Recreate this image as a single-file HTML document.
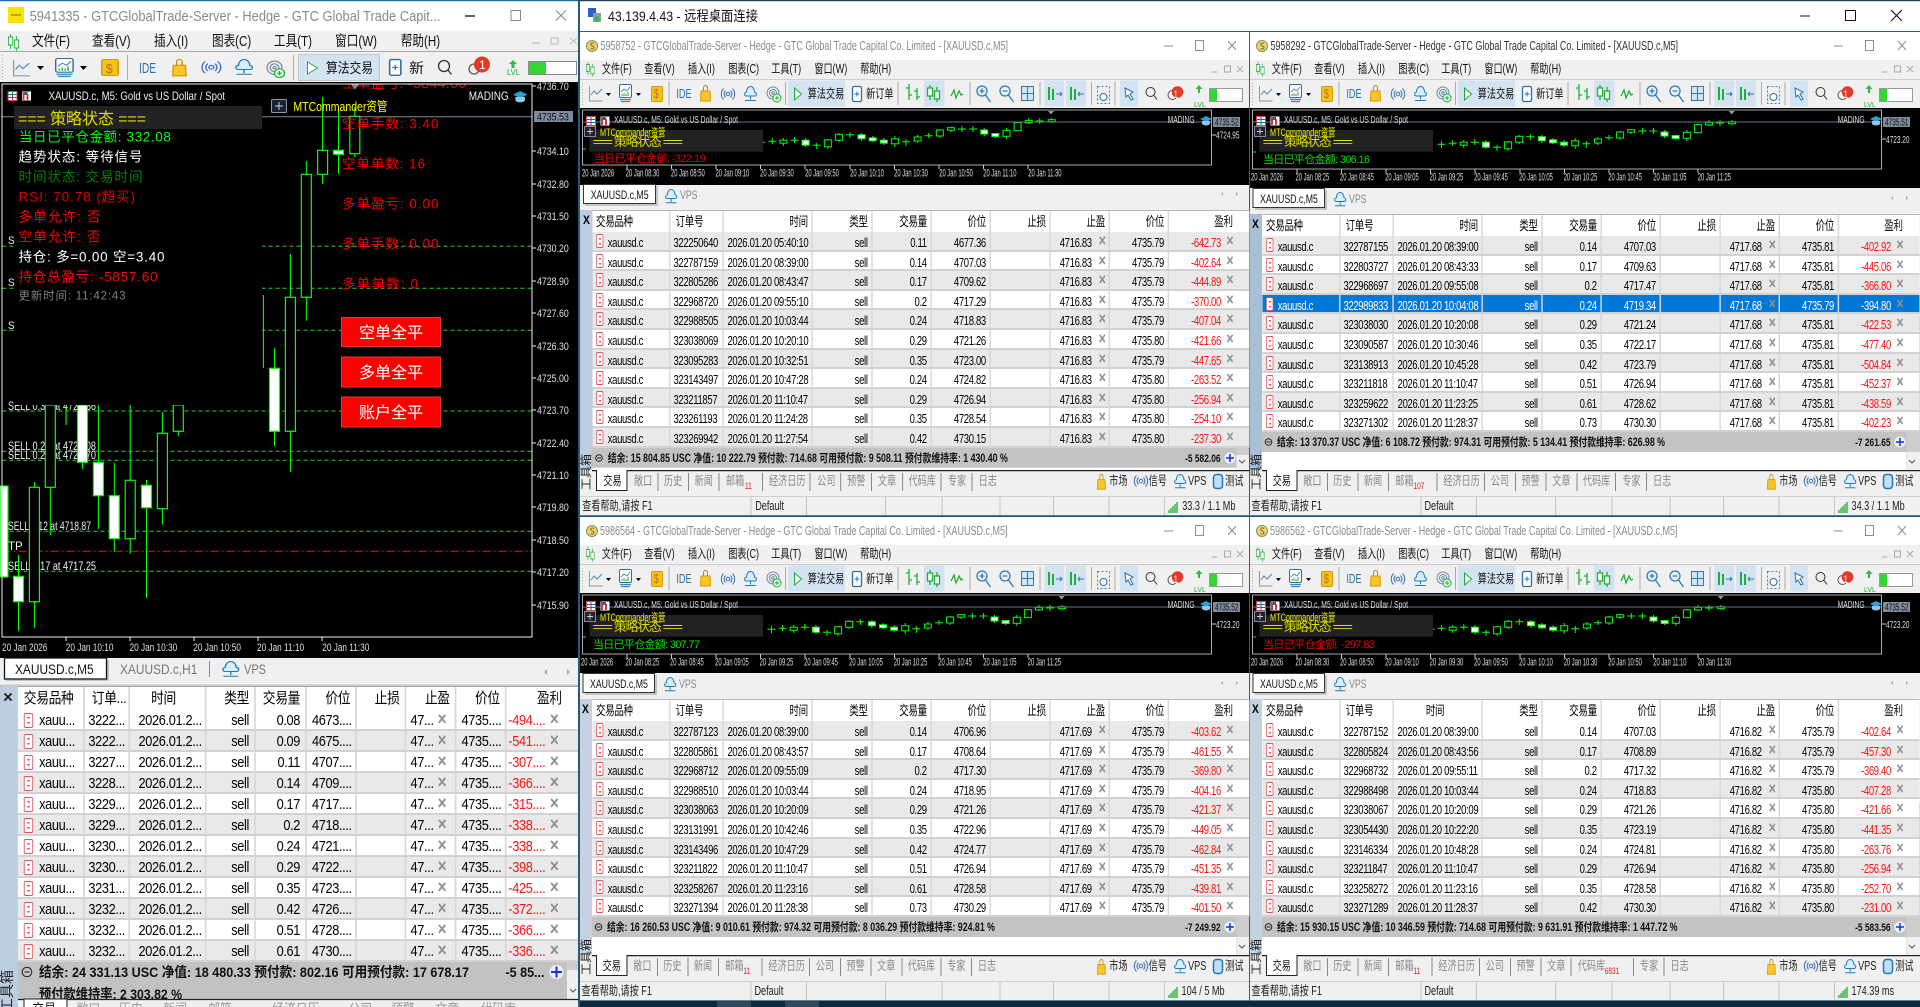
<!DOCTYPE html>
<html><head><meta charset="utf-8"><title>Remote</title>
<style>
html,body{margin:0;padding:0;background:#0c2a3c;width:1920px;height:1007px;overflow:hidden}
body{position:relative;font-family:"Liberation Sans","Noto Sans CJK SC",sans-serif}
svg{position:absolute;left:0;top:0;font-family:"Liberation Sans","Noto Sans CJK SC",sans-serif}
.bl{filter:blur(.35px)}
.t{position:absolute;width:917px;transform:scaleX(.73);transform-origin:0 0;font-size:13px;letter-spacing:-.45px;color:#000;filter:blur(.3px)}
.r{display:grid;grid-template-columns:105px 73px 122px 82px 81px 81px 82px 81px 81px 94px;margin-left:17px;height:19.6px;line-height:21.5px;border-bottom:2px solid #d2d2d2;box-sizing:border-box;background:#fff}
.r.g{background:#e9e9e9}
.r.s{background:#0078d7;color:#fff}
.r b{font-weight:400;display:block;position:relative;border-left:2px solid #d8d8d8;padding:0 5px;text-align:right;white-space:nowrap;overflow:hidden}
.r b:nth-child(1){text-align:left;padding-left:21px;border-left:0}
.r b:nth-child(2){text-align:left;padding-left:4px}
.r b:nth-child(8){padding-right:23px}
.r b:nth-child(10){padding-right:21px;color:#f11}
.r.s b:nth-child(10){color:#fff}
.r b:nth-child(8)::after,.r b:nth-child(10)::after{content:"×";position:absolute;right:4px;top:-1px;color:#8f8f8f;font-size:17px;line-height:20px;font-weight:700}
.r b:nth-child(1)::before{content:"";position:absolute;left:5px;top:2px;width:8px;height:12px;border:1.3px solid #e2525c;border-radius:2px;background:linear-gradient(#e2525c,#e2525c) 3px 3px/3px 1.5px no-repeat,linear-gradient(#e2525c,#e2525c) 3px 8px/3px 1.5px no-repeat,#fff}
.h{height:22px;line-height:21px;border-top:1px solid #b8b8b8;border-bottom:0;margin-left:17px}
.h b:nth-child(8){padding-right:5px}.h b:nth-child(10){padding-right:5px;color:#111}
.h b:nth-child(1)::before,.h b:nth-child(8)::after,.h b:nth-child(10)::after{display:none}
.h b:nth-child(1){padding-left:5px}.h b:nth-child(2){padding-left:7px}
.lt{width:680px;transform:scaleX(.85);font-size:15px;letter-spacing:-.4px;filter:none}
.lt .r{grid-template-columns:77px 53px 90px 58px 60px 59px 58px 59px 59px 73px;margin-left:21px;height:21px;line-height:21px}
.lt .r b{padding:0 6px;text-align:left}
.lt .r b:nth-child(1){padding-left:25px}
.lt .r b:nth-child(1)::before{left:7px;top:3px;width:9px;height:13px}
.lt .r b:nth-child(2){padding-left:4px}
.lt .r b:nth-child(3){padding-left:10px}
.lt .r b:nth-child(4),.lt .r b:nth-child(5){text-align:right}
.lt .r b:nth-child(8){padding:0 5px}
.lt .r b:nth-child(10){padding:0 2px}
.lt .r b:nth-child(8)::after,.lt .r b:nth-child(10)::after{right:10px;font-size:18px}
.lt .h{height:24px;line-height:23px;border-top:1px solid #aaa}
.lt .h b{text-align:right!important;padding:0 6px!important}
.lt .h b:nth-child(1){text-align:left!important;padding-left:7px!important}
.lt .h b:nth-child(2){text-align:left!important;padding-left:8px!important}
.lt .h b:nth-child(3){padding-right:34px!important}
</style></head><body>
<svg width="1920" height="1007" viewBox="0 0 1920 1007">
<defs>
<clipPath id="cc"><rect x="0" y="84" width="578" height="20"/></clipPath>
<g id="iL" fill="none"><path d="M.5 1v15h13" stroke="#8a9aa8"/><path d="M2 10l3-4 3 3 5-5" stroke="#4a8ac0"/></g>
<g id="iC"><rect x=".5" y=".5" width="12" height="13" rx="1.5" fill="#fff" stroke="#2a6fa8"/><path d="M2 8l3-3 3 2 3-4" stroke="#4a8ac0" fill="none"/><path d="M3 12v-2M5 12v-3M7 12v-2M9 12v-4" stroke="#1fae3a"/><path d="M1 15.5h11M2 17.5h9" stroke="#2a8fc8" stroke-width="1.2"/></g>
<g id="iD"><rect x=".5" y=".5" width="11" height="15" rx="1.5" fill="#f6c21c" stroke="#d69a00"/></g>
<g id="iB"><path d="M1 6h9l.5 10H.5z" fill="#f8c62a" stroke="#d69a00"/><path d="M3.500 6V2.500a2 2 0 0 1 4 0V6" fill="none" stroke="#c48a00"/></g>
<g id="iS" fill="none" stroke="#3a6fb8"><circle cx="6" cy="7" r="1.8"/><path d="M3.500 3.500a5 5 0 0 0 0 7M8.500 3.500a5 5 0 0 1 0 7M1.500 1.500a8 8 0 0 0 0 11M10.500 1.500a8 8 0 0 1 0 11"/></g>
<g id="iO"><path d="M2.500 10C0 10 0 6.500 2.500 6 2.500 2.500 4.500.5 6.500.5s4 2 4 5.500c2.500.5 2.500 4 0 4z" fill="#d8eefc" stroke="#1f7ab8"/><path d="M6.500 10v3.500M1 14.500h11" stroke="#1f7ab8" fill="none"/></g>
<g id="iG" fill="none"><circle cx="6" cy="7" r="6" stroke="#6a8aa8"/><circle cx="6" cy="7" r="3.5" stroke="#6a8aa8"/><circle cx="6" cy="7" r="1.2" stroke="#6a8aa8"/><circle cx="10" cy="12" r="4" fill="#e8f8e8" stroke="#1fae3a"/><path d="M8 12h4M10 10v4" stroke="#1fae3a"/></g>
<g id="iN"><rect x=".5" y=".5" width="9" height="15" rx="1.5" fill="#fff" stroke="#2a6fa8" stroke-width="1.3"/><path d="M2.500 8h5M5 5.500v5" stroke="#2a6fa8" fill="none"/></g>
<g id="iK" stroke="#1fae3a" fill="#fff"><path d="M3 0v15M10 2v15"/><rect x=".5" y="3" width="5" height="8"/><rect x="7.500" y="6" width="5" height="8"/></g>
<g id="iH"><rect x=".5" y=".5" width="9" height="9" fill="#fff" stroke="#e04040"/><path d="M1 3.500h8M1 6.500h8M5 1v8" stroke="#2a5fa8"/><rect x="14.500" y=".5" width="9" height="9" fill="#fff"/><path d="M15 9V1h2v8zM19 9V3h2v6z" fill="#c04040"/><path d="M17 1h3v3h-3z" fill="#2a5fa8"/></g>
<g id="iW"><path d="M0 3l6-3 6 3-6 3z" fill="#2a9fd8"/><path d="M2 5v3c2 2 6 2 8 0V5" fill="#8cc8ec"/></g>
<g id="iT"><circle cx="6" cy="7" r="5.500" fill="#eed078" stroke="#7a9a50"/><path d="M8 4.500c-2-1.500-4 0-3 1.500s3 1 3 2.500-2 2-3.500 1" fill="none" stroke="#8a6a10"/></g>
<g id="tb">
<path d="M2.500 3v22" stroke="#aaa" stroke-dasharray="1 2"/>
<use href="#iL" x="9" y="5"/><path d="M26 13h5l-2.500 3z"/>
<use href="#iC" x="39" y="4"/><path d="M56 13h5l-2.500 3z"/>
<use href="#iD" x="71" y="6"/>
<path d="M89 2v23M205.500 2v23M318 2v23M390 2v23M460 2v23M511.500 2v23M535 2v23" stroke="#aaa"/>
<use href="#iB" x="120" y="5"/><use href="#iS" x="142" y="7"/><use href="#iO" x="164" y="6"/><use href="#iG" x="187" y="6"/>
<rect x="208" y=".5" width="57" height="26" fill="#d3e3f2"/><path d="M214.500 8v12l7-6z" fill="#fff" stroke="#1fae3a"/>
<use href="#iN" x="272" y="6"/>
<path d="M329 4v16M329 8h-3M329 15h3M337 8v12M337 11h-3M337 17h3" stroke="#1fae3a" fill="none" stroke-width="1.300"/>
<rect x="344" y=".5" width="20.500" height="26" fill="#d3e3f2"/><use href="#iK" x="347" y="5" stroke-width="1.300"/>
<path d="M371 16l3-6 2 8 3-7 2 4 2-1" stroke="#1fae3a" fill="none" stroke-width="1.300"/>
<g fill="none" stroke="#2a7cb8" stroke-width="1.300"><circle cx="402" cy="11" r="5"/><path d="M405.500 15l5 7M399.500 11h5M402 8.500v5"/><circle cx="425" cy="11" r="5"/><path d="M428.500 15l5 7M422.500 11h5"/></g>
<rect x="441.500" y="6.500" width="12" height="14" fill="#cfe6f7" stroke="#2a7cb8"/><path d="M441.500 13.500h12M447.500 6.500v14" stroke="#2a7cb8"/>
<rect x="464.500" y=".5" width="19.500" height="26" fill="#d3e3f2"/><rect x="486" y=".5" width="20" height="26" fill="#d3e3f2"/>
<path d="M469 7v13M473 9v11" stroke="#1fae3a" fill="none" stroke-width="2"/><path d="M476 14h6M480 12l2 2-2 2" stroke="#2a7cb8" fill="none"/><path d="M491 7v13M495 9v11" stroke="#1fae3a" fill="none" stroke-width="2"/><path d="M498 14h6M498 14l2-2M498 14l2 2" stroke="#2a7cb8" fill="none"/>
<rect x="517.500" y="6.500" width="12" height="17" fill="none" stroke="#3a8ac0" stroke-dasharray="2 2"/><circle cx="523.500" cy="17" r="3.500" fill="#fff" stroke="#2a6fa8"/>
<rect x="540" y=".5" width="18" height="26" fill="#d3e3f2"/><path d="M545 8l8 4-3 2 3 5-2 1-3-5-2 2z" fill="#fff" stroke="#2a6fa8"/>
<circle cx="570.500" cy="12" r="4.500" fill="none" stroke="#333"/><path d="M574 15.500l3 4" stroke="#333"/>
<circle cx="592.500" cy="15" r="4.500" fill="none" stroke="#555"/><circle cx="597.500" cy="12" r="5.800" fill="#e13a28"/>
<path d="M619 5l-3.500 4h2.500v4h2V9h2.500z" fill="#3ab54a"/>
<rect x="629.500" y="8.500" width="33" height="13" fill="#fff" stroke="#999"/><rect x="630" y="9" width="7" height="12" fill="#35d535"/>
</g>
<g id="chrome">
<rect x="0" y="32" width="670" height="28" fill="#fff"/>
<rect x="0" y="60" width="670" height="20" fill="#f0f0f0"/><path d="M0 79.500h670" stroke="#cfcfcf"/>
<rect x="0" y="80" width="670" height="28" fill="#f0f0f0"/>
<use href="#tb" y="80"/>
<use href="#iT" x="6" y="39"/>
<path d="M584 46h9M648 41l8 9M656 41l-8 9" stroke="#8f8f8f" fill="none"/><rect x="615.500" y="40.500" width="8" height="10" fill="none" stroke="#8f8f8f"/>
<use href="#iK" transform="translate(6,62) scale(.65,.85)"/>
<path d="M632 72h5M644.500 66h6v6h-6zM657 66l6 6M663 66l-6 6" stroke="#aaa" fill="none"/>
<rect x="0" y="470" width="670" height="26" fill="#f0f0f0"/><path d="M12 470.500h658" stroke="#222" stroke-width="1.500"/>
<path d="M16.500 470v20.500h30.500V470" fill="#fff" stroke="#222"/>
<use href="#iB" transform="translate(517,474) scale(.8,.95)"/><use href="#iS" x="555" y="474"/><use href="#iO" transform="translate(594,474) scale(.95)"/>
<rect x="633.500" y="474.500" width="9" height="14" rx="3" fill="#bfe0f6" stroke="#1f7ab8" stroke-width="1.500"/>
<rect x="0" y="496" width="670" height="20" fill="#f0f0f0"/><path d="M0 496.500h670" stroke="#d0d0d0"/>
<path d="M171 497v19M226.500 497v19M305.600 497v19M362 497v19M420 497v19M473.500 497v19M529 497v19M584.600 497v19" stroke="#c4c4c4"/>
<path d="M589 510v3M591 508v5M593 506v7M595 504v9M597 502v11" stroke="#22aa33" stroke-width="1.300"/>
<path d="M0 516h670" stroke="#2a5a78" stroke-width="1.500"/>
</g>
<g id="mc">
<path d="M191.500 31v7M187.500 34.300h8M202.600 30v6M198.600 33.300h8M213.700 30v8M224.800 29v6M220.800 32.300h8M235.900 30v9M247 35v6M243 37.300h8M258.100 31v10M269.200 25v9M280.300 24v6M276.300 26.700h8M291.900 25v8M303 28v6M314.100 30v7M325.200 28v11M336.300 31v7M332.300 33.700h8M347.900 27v8M359 25v5M355 27.700h8M370.100 21v9M381.200 19v5M392.300 18v6M388.300 21h8M403.400 18v6M399.400 21h8M414.500 20v8M425.600 25v5M436.800 20v11M447.900 14v9M459 10v6M470 10v6M466 13h8M482 10v5" stroke="#0f0" fill="none"/>
<g stroke="#0f0"><g fill="#000"><rect x="210.200" y="32.200" width="7" height="3"/><rect x="254.600" y="31.800" width="7" height="7"/><rect x="265.700" y="26.300" width="7" height="6"/><rect x="321.700" y="30.800" width="7" height="5"/><rect x="344.400" y="29" width="7" height="4"/><rect x="366.600" y="22" width="7" height="6"/><rect x="377.700" y="19.700" width="7" height="2.500"/><rect x="433.300" y="22.300" width="7" height="6"/><rect x="444.400" y="14.700" width="7" height="8"/><rect x="455.500" y="12.400" width="7" height="2.500"/><rect x="478.500" y="11.700" width="7" height="2"/></g>
<g fill="#fff"><rect x="232.400" y="32.200" width="7" height="5"/><rect x="288.400" y="26.700" width="7" height="4"/><rect x="299.500" y="29.800" width="7" height="3"/><rect x="310.600" y="32.200" width="7" height="3"/><rect x="411" y="22" width="7" height="4"/><rect x="422.100" y="25.500" width="7" height="3"/></g></g>
</g>
</defs>

<!-- LEFT WINDOW -->
<rect x="0" y="0" width="580" height="1007" fill="#f0f0f0"/>
<rect x="0" y="0" width="578" height="31" fill="#fff"/><rect x="0" y="0" width="578" height="1.200" fill="#1f6f96"/>
<rect x="8" y="7" width="16" height="16" fill="#ffe100"/><path d="M11 15h10" stroke="#665" stroke-width="1"/>
<text x="29.600" y="21" font-size="15" fill="#8a8a8a" textLength="411" lengthAdjust="spacingAndGlyphs">5941335 - GTCGlobalTrade-Server - Hedge - GTC Global Trade Capit...</text>
<path d="M465 16h10" stroke="#111" stroke-width="1.300"/><rect x="511" y="10.500" width="9.500" height="10" fill="none" stroke="#888"/><path d="M556 10.500l10 10M566 10.500l-10 10" stroke="#888"/>
<rect x="0" y="31" width="578" height="20" fill="#f0f0f0"/><path d="M0 51.500h578" stroke="#aaa"/>
<use href="#iK" transform="translate(8,34) scale(.85,1)"/>
<g transform="scale(.8,1)" font-size="14.500" fill="#111"><text y="46"><tspan x="40">文件(F)</tspan><tspan x="115">查看(V)</tspan><tspan x="192.500">插入(I)</tspan><tspan x="265">图表(C)</tspan><tspan x="342.500">工具(T)</tspan><tspan x="419">窗口(W)</tspan><tspan x="501">帮助(H)</tspan></text></g>
<path d="M532 43h8M551 38h7v6h-7zM570 38l7 6M577 38l-7 6" stroke="#bbb" fill="none"/>
<rect x="0" y="52" width="578" height="30" fill="#f0f0f0"/>
<path d="M2.500 55v25" stroke="#aaa" stroke-dasharray="1 2"/>
<use href="#iL" transform="translate(13,59) scale(1.25,1.05)"/><path d="M37 66h7l-3.500 4z"/>
<use href="#iC" transform="translate(55,58) scale(1.45,1.05)"/><path d="M80 66h7l-3.500 4z"/>
<use href="#iD" transform="translate(101,59) scale(1.5,1.06)"/><text x="105.500" y="73" font-size="13" fill="#b07a00">$</text>
<path d="M127.500 55v25M293.500 55v25" stroke="#aaa"/>
<text x="139" y="73" font-size="15" fill="#2a6fa8" textLength="17" lengthAdjust="spacingAndGlyphs">IDE</text>
<use href="#iB" transform="translate(172,59) scale(1.35,1.05)"/>
<use href="#iS" transform="translate(203,60) scale(1.4,1.05)"/><use href="#iO" transform="translate(235,59) scale(1.4,1.05)"/><use href="#iG" transform="translate(267,60) scale(1.25,1.1)"/>
<rect x="298.500" y="54.500" width="81" height="26" fill="#d3e3f2" stroke="#c0c8d0"/><path d="M307.500 62v12l10-6z" fill="#fff" stroke="#1fae3a"/>
<text x="326" y="73" font-size="14" fill="#111" textLength="47" lengthAdjust="spacingAndGlyphs">算法交易</text>
<use href="#iN" transform="translate(389,59) scale(1.25,1.05)"/>
<text x="409" y="73" font-size="14" fill="#111" textLength="15" lengthAdjust="spacingAndGlyphs">新</text>
<circle cx="444" cy="66" r="5.500" fill="none" stroke="#333" stroke-width="1.300"/><path d="M448 70l3.500 4.500" stroke="#333" stroke-width="1.300"/>
<circle cx="474" cy="69" r="5" fill="none" stroke="#555" stroke-width="1.300"/><circle cx="482" cy="64.500" r="8" fill="#e13a28"/><text x="479" y="69" font-size="12" fill="#fff">1</text>
<path d="M513 60l-4 4h2.500v4h3v-4h2.500z" fill="#3ab54a"/><text x="507" y="75" font-size="8" fill="#1fae3a" textLength="13" lengthAdjust="spacingAndGlyphs">LVL</text>
<rect x="528.500" y="61.500" width="48" height="13" fill="#fff" stroke="#888"/><rect x="529" y="62" width="17" height="12" fill="#35d535"/>

<rect x="0" y="82" width="578" height="576" fill="#000"/>
<g font-size="14" fill="#d00" clip-path="url(#cc)"><text x="342" y="88" fill="#e00" textLength="124">空单盈亏: -5844.00</text></g>
<path d="M2.500 246.300H532M2.500 288.300H532M2.500 330.300H532M2.500 411H532M2.500 451.300H532M2.500 460.300H532M2.500 531.300H532M2.500 571.300H532" stroke="#28d028" stroke-dasharray="4 3" fill="none"/>
<path d="M2.500 551.300H532" stroke="#e01818" stroke-dasharray="8 3 2 3" fill="none"/>
<g fill="#eee" font-size="11.500"><text x="8" y="410" textLength="88" lengthAdjust="spacingAndGlyphs">SELL 0.35 at 4721.36</text><text x="8" y="450" textLength="88" lengthAdjust="spacingAndGlyphs">SELL 0.29 at 4722.08</text><text x="8" y="459" textLength="88" lengthAdjust="spacingAndGlyphs">SELL 0.24 at 4721.70</text><text x="8" y="530" textLength="83" lengthAdjust="spacingAndGlyphs">SELL 0.12 at 4718.87</text><text x="8" y="550">TP</text><text x="8" y="570" textLength="88" lengthAdjust="spacingAndGlyphs">SELL 0.17 at 4717.25</text></g>
<path d="M18.500 555V631M34.400 482V627.700M50.300 405V535M66 405V425M82.500 405V469M98.400 405V529M114.300 463V551.700M130.200 405V553.700M146.500 480V597.700M162.400 412.300V524.700M178.300 405V436M263.400 295V368M274.500 348.300V446M290.400 254V471.700M306.300 161V320.700M322.600 97V183.700M338.500 108V173.700M354.800 107V157.300" stroke="#0f0" stroke-width="1.100" fill="none"/>
<g stroke="#0f0" stroke-width="1.200">
<g fill="#fff"><rect x="0" y="486" width="8" height="91"/><rect x="13.500" y="576.300" width="10" height="25.400"/><rect x="77.500" y="405" width="10" height="57.300"/><rect x="93.400" y="462.300" width="10" height="33.400"/><rect x="109.300" y="495.700" width="10" height="43"/><rect x="141.500" y="485.300" width="10" height="22.400"/><rect x="269.500" y="368.300" width="10" height="63"/><rect x="333.500" y="150.300" width="10" height="4"/></g>
<g fill="#000"><rect x="29.400" y="487.300" width="10" height="114.400"/><rect x="45.300" y="405" width="10" height="82.300"/><rect x="125.200" y="480.300" width="10" height="58.400"/><rect x="157.400" y="433.300" width="10" height="75.400"/><rect x="173.300" y="405" width="10" height="26.300"/><rect x="285.400" y="297.300" width="10" height="134"/><rect x="301.300" y="174.300" width="10" height="123"/><rect x="317.600" y="150.300" width="10" height="24"/><rect x="349.800" y="116.300" width="10" height="37.400"/></g></g>
<rect x="14" y="85" width="248" height="320" fill="#000"/>
<path d="M2.500 116.700H532" stroke="#7d8c9c"/>
<rect x="14" y="106" width="248" height="23" fill="#222"/>
<rect x="2" y="84" width="530" height="553" fill="none" stroke="#eee"/>
<path d="M351 84.500h8l-4 5z" fill="#888"/>
<use href="#iH" transform="translate(7.500,91) scale(1,1)"/>
<text x="48.500" y="100" font-size="12" fill="#eee" textLength="176.500" lengthAdjust="spacingAndGlyphs">XAUUSD.c, M5:  Gold vs US Dollar / Spot</text>
<text x="468.700" y="100" font-size="12" fill="#eee" textLength="40" lengthAdjust="spacingAndGlyphs">MADING</text>
<use href="#iW" transform="translate(513,91) scale(1.2)"/>
<g fill="#eee" font-size="11"><text transform="translate(8,244) scale(.9,1)">S</text><text transform="translate(8,286) scale(.9,1)">S</text><text transform="translate(8,329) scale(.9,1)">S</text></g>
<text x="18" y="124" font-size="16" fill="#dede00" textLength="128">=== 策略状态 ===</text>
<g font-size="13.500">
<text x="18.900" y="141.500" fill="#0f0" textLength="152">当日已平仓金额: 332.08</text>
<text x="18.500" y="161.500" fill="#fff" textLength="124">趋势状态: 等待信号</text>
<text x="18.500" y="181.500" fill="#008000" textLength="124">时间状态: 交易时间</text>
<text x="18.500" y="201.500" fill="#d80000" textLength="116.500">RSI: 70.78 (超买)</text>
<text x="18.500" y="221.500" fill="#f00" textLength="82">多单允许: 否</text>
<text x="18.500" y="241.500" fill="#f00" textLength="82">空单允许: 否</text>
<text x="18.500" y="261.500" fill="#fff" textLength="146">持仓: 多=0.00 空=3.40</text>
<text x="18.500" y="281.500" fill="#f00" textLength="139">持仓总盈亏: -5857.60</text>
<text x="18.500" y="299.500" fill="#808080" font-size="11.500" textLength="107">更新时间: 11:42:43</text>
<text x="342" y="128.500" fill="#e00" textLength="96.500">空单手数: 3.40</text>
<text x="342" y="168.500" fill="#e00" textLength="83">空单单数: 16</text>
<text x="342" y="208.500" fill="#e00" textLength="96.500">多单盈亏: 0.00</text>
<text x="342" y="248.500" fill="#e00" textLength="96.500">多单手数: 0.00</text>
<text x="342" y="288.500" fill="#e00" textLength="76">多单单数: 0</text>
</g>
<rect x="271.500" y="99.500" width="15" height="13" rx="1" fill="#1a2430" stroke="#8899aa"/><path d="M275 106h8M279 102v8" stroke="#ccd"/>
<text x="293.400" y="111" font-size="13" fill="#ff0" textLength="94" lengthAdjust="spacingAndGlyphs">MTCommander资管</text>
<g fill="#f00" stroke="#e33"><rect x="341.500" y="317.500" width="99" height="29"/><rect x="341.500" y="357" width="99" height="30"/><rect x="341.500" y="397" width="99" height="30"/></g>
<g font-size="16" fill="#fff" text-anchor="middle"><text x="391" y="338">空单全平</text><text x="391" y="378">多单全平</text><text x="391" y="418">账户全平</text></g>
<path d="M532 86h4M532 151h4M532 184h4M532 216h4M532 248h4M532 281h4M532 313h4M532 346h4M532 378h4M532 410h4M532 443h4M532 475h4M532 507h4M532 540h4M532 572h4M532 605h4M66 637v4M130 637v4M194 637v4M258 637v4M322 637v4" stroke="#eee"/>
<g font-size="11" fill="#e0e0e0" transform="translate(537,0) scale(.8,1)"><text y="90">4736.70</text><text y="155">4734.10</text><text y="188">4732.80</text><text y="220">4731.50</text><text y="252">4730.20</text><text y="285">4728.90</text><text y="317">4727.60</text><text y="350">4726.30</text><text y="382">4725.00</text><text y="414">4723.70</text><text y="447">4722.40</text><text y="479">4721.10</text><text y="511">4719.80</text><text y="544">4718.50</text><text y="576">4717.20</text><text y="609">4715.90</text></g>
<rect x="534" y="111" width="39" height="11" fill="#7d8c9c"/><text transform="translate(537,120.500) scale(.8,1)" font-size="11" fill="#111">4735.53</text>
<g font-size="11" fill="#e0e0e0" transform="translate(2,651) scale(.75,1)"><text><tspan x="0">20 Jan 2026</tspan><tspan x="85">20 Jan 10:10</tspan><tspan x="170">20 Jan 10:30</tspan><tspan x="255">20 Jan 10:50</tspan><tspan x="340">20 Jan 11:10</tspan><tspan x="427">20 Jan 11:30</tspan></text></g>

<rect x="0" y="658" width="578" height="28" fill="#f0f0f0"/>
<rect x="4.500" y="658" width="102" height="21" fill="#fff" stroke="#111" stroke-width="1.300"/><path d="M108 660v20H6" stroke="#999" fill="none"/>
<text transform="translate(15,674) scale(.85,1)" font-size="14" fill="#111">XAUUSD.c,M5</text>
<text transform="translate(120,674) scale(.85,1)" font-size="14" fill="#777">XAUUSD.c,H1</text>
<path d="M209.500 661v16" stroke="#888"/><use href="#iO" transform="translate(222,661) scale(1.35,1.05)"/>
<text x="244" y="674" font-size="14" fill="#777" textLength="22" lengthAdjust="spacingAndGlyphs">VPS</text>
<path d="M547 669l-3 3 3 3zM567 669l3 3-3 3z" fill="#aaa"/>
<rect x="0" y="684.500" width="578" height="1.500" fill="#c8c8c8"/>
<rect x="0" y="686" width="18" height="321" fill="#bccde0"/><rect x="18" y="686" width="549" height="313" fill="#fff"/>
<path d="M4.500 693.500l7 7M11.500 693.500l-7 7" stroke="#111" stroke-width="1.600"/>
<rect x="567" y="686" width="11" height="321" fill="#f0f0f0"/><rect x="567" y="770" width="11" height="200" fill="#cdcdcd"/>
<path d="M571 698l3-3 3 3M571 989l3 3 3-3" stroke="#555" fill="none" transform="translate(-1,0)"/>
<path d="M187 699h7l-3.500-3.500z" fill="#222"/>
<rect x="18" y="961" width="549" height="38" fill="#c2c2c2"/>
<circle cx="27" cy="972" r="4.800" fill="none" stroke="#222"/><path d="M24.500 972h5" stroke="#222"/>
<text x="39" y="977" font-size="14" font-weight="700" fill="#111" textLength="430" lengthAdjust="spacingAndGlyphs">结余: 24 331.13 USC  净值: 18 480.33  预付款: 802.16  可用预付款: 17 678.17</text>
<text x="505.500" y="977" font-size="14" font-weight="700" fill="#111" textLength="39" lengthAdjust="spacingAndGlyphs">-5 85...</text>
<circle cx="556.500" cy="972" r="7" fill="#eef2fa"/><path d="M551 972h11M556.500 966.500v11" stroke="#1b2fe0" stroke-width="2"/>
<text x="39" y="999" font-size="14" font-weight="700" fill="#111" textLength="143" lengthAdjust="spacingAndGlyphs">预付款维持率: 2 303.82 %</text>
<rect x="18" y="999" width="560" height="8" fill="#f0f0f0"/><path d="M18 999.500h560" stroke="#222" stroke-width="1.200"/>
<rect x="24" y="999" width="43" height="9" fill="#fff" stroke="#222"/>
<g font-size="14" fill="#999"><text transform="translate(0,1014) scale(.85,1)"><tspan x="38" fill="#111">交易</tspan><tspan x="90">敞口</tspan><tspan x="140">历史</tspan><tspan x="192">新闻</tspan><tspan x="245">邮箱</tspan><tspan x="320">经济日历</tspan><tspan x="410">公司</tspan><tspan x="460">预警</tspan><tspan x="512">文章</tspan><tspan x="565">代码库</tspan></text></g>
<text transform="translate(12,1012) rotate(-90)" font-size="14" fill="#222">工具箱</text>
<rect x="578" y="0" width="2" height="1007" fill="#2a5a78"/>

<!-- RDP TITLE -->
<rect x="580" y="0" width="1340" height="31" fill="#fff"/><rect x="578" y="0" width="1342" height="1.200" fill="#1d3f58"/>
<rect x="588" y="8" width="8" height="9" fill="#2a5fc8"/><rect x="593" y="13" width="8" height="9" fill="#8a9aa8"/><circle cx="597" cy="19" r="2.500" fill="#2bb84a"/>
<text x="608" y="21" font-size="14" fill="#111" textLength="150" lengthAdjust="spacingAndGlyphs">43.139.4.43 - 远程桌面连接</text>
<path d="M1800 16h10M1891 10l11 11M1902 10l-11 11" stroke="#111" stroke-width="1.100" fill="none"/><rect x="1845.500" y="10.500" width="10" height="10" fill="none" stroke="#111"/>
<rect x="578" y="31" width="1342" height="1" fill="#2f5f80"/>

<g class="bl">
<!-- TL -->
<g transform="translate(580,0)">
<use href="#chrome"/>
<text x="20.500" y="50" font-size="13" fill="#8a8a8a" textLength="407.500" lengthAdjust="spacingAndGlyphs">5958752 - GTCGlobalTrade-Server - Hedge - GTC Global Trade Capital Co. Limited - [XAUUSD.c,M5]</text>
<g transform="scale(.73,1)" font-size="12.500" fill="#111"><text y="73"><tspan x="30">文件(F)</tspan><tspan x="88">查看(V)</tspan><tspan x="148">插入(I)</tspan><tspan x="203">图表(C)</tspan><tspan x="262">工具(T)</tspan><tspan x="321">窗口(W)</tspan><tspan x="384">帮助(H)</tspan></text>
<text y="98"><tspan x="132" fill="#2a6fa8">IDE</tspan><tspan x="312">算法交易</tspan><tspan x="392">新订单</tspan><tspan x="101" fill="#b07a00">$</tspan><tspan x="813" fill="#fff" font-size="11">1</tspan></text></g>
<text x="614" y="107" font-size="7" fill="#1fae3a">LVL</text>
<rect y="108" width="670" height="77" fill="#000"/>
<use href="#mc" transform="translate(-10.300,108)"/>
<rect x="3" y="111" width="180" height="53" fill="#000"/><rect x="9.400" y="130" width="173.600" height="21.700" fill="#222"/>
<path d="M3 149h3" stroke="#0f0"/><path d="M2 122h630" stroke="#667788"/>
<rect x="2.500" y="110" width="629" height="55" fill="none" stroke="#aaa"/>
<path d="M468 111h6l-3 3.500z" fill="#999"/>
<use href="#iH" x="6" y="116"/>
<text x="34" y="123" font-size="10" fill="#ddd" textLength="124" lengthAdjust="spacingAndGlyphs">XAUUSD.c, M5:  Gold vs US Dollar / Spot</text>
<text x="587.600" y="123" font-size="10" fill="#ddd" textLength="27" lengthAdjust="spacingAndGlyphs">MADING</text><use href="#iW" x="620" y="116"/>
<rect x="4.500" y="126.500" width="11" height="10" fill="#223" stroke="#889"/><path d="M7 131.500h6M10 128.500v6" stroke="#ccc"/>
<text x="12.800" y="146" font-size="13" fill="#dede00" textLength="90">=== 策略状态 ===</text>
<text x="20" y="136" font-size="11" fill="#ee0" textLength="65.500" lengthAdjust="spacingAndGlyphs">MTCommander资管</text>
<text x="13.700" y="162" font-size="11" fill="#e00000" textLength="112">当日已平仓金额: -322.19</text>
<rect x="633" y="117" width="27" height="10" fill="#7d8c9c"/><text transform="translate(635,125.500) scale(.62,1)" font-size="10.500" fill="#111">4735.52</text>
<path d="M632 135h4M47 165v4M91.500 165v4M136 165v4M180.500 165v4M225 165v4M270 165v4M314.500 165v4M359 165v4M403.500 165v4M448 165v4" stroke="#ccc"/>
<text transform="translate(636,138.500) scale(.62,1)" font-size="10.500" fill="#ddd">4724.95</text>
<g transform="translate(2,176.500) scale(.53,1)" font-size="11" fill="#ddd"><text><tspan x="0">20 Jan 2026</tspan><tspan x="82.500">20 Jan 08:30</tspan><tspan x="168">20 Jan 08:50</tspan><tspan x="252">20 Jan 09:10</tspan><tspan x="336">20 Jan 09:30</tspan><tspan x="421">20 Jan 09:50</tspan><tspan x="506">20 Jan 10:10</tspan><tspan x="589">20 Jan 10:30</tspan><tspan x="674">20 Jan 10:50</tspan><tspan x="757">20 Jan 11:10</tspan><tspan x="842">20 Jan 11:30</tspan></text></g>
<rect y="185" width="670" height="25" fill="#f0f0f0"/>
<rect x="3.500" y="184.500" width="72" height="19" fill="#fff" stroke="#333"/><path d="M77 186v19H5" stroke="#999" fill="none"/>
<text transform="translate(10.700,199) scale(.73,1)" font-size="12" fill="#111">XAUUSD.c,M5</text>
<use href="#iO" transform="translate(85,189) scale(.95)"/><text transform="translate(100,199) scale(.73,1)" font-size="12" fill="#888">VPS</text>
<path d="M643 192l-2 2 2 2zM656 192l2 2-2 2" fill="#aaa"/>
<rect y="210" width="12.400" height="260" fill="#bccde0"/><rect x="12.400" y="210" width="644" height="260" fill="#fff"/>
<text transform="translate(3,224) scale(.85,1)" font-size="12" font-weight="700">X</text>
<path d="M62 222.500h6l-3-3z"/>
<rect x="656.400" y="210" width="13.600" height="260" fill="#f0f0f0"/><rect x="656.400" y="258" width="13.600" height="197" fill="#cdcdcd"/>
<path d="M659 220l3-3 3 3M659 460l3 3 3-3" stroke="#555" fill="none"/>
<rect x="12.400" y="447.700" width="644" height="20" fill="#c3c3c3"/>
<circle cx="19" cy="458" r="3.300" fill="none" stroke="#222"/><path d="M17 458h4" stroke="#222"/>
<text x="27.800" y="462" font-size="11.500" font-weight="700" fill="#111" textLength="400" lengthAdjust="spacingAndGlyphs">结余: 15 804.85 USC  净值: 10 222.79  预付款: 714.68  可用预付款: 9 508.11  预付款维持率: 1 430.40 %</text>
<text x="640.600" y="462" font-size="11.500" font-weight="700" text-anchor="end" fill="#111" transform="translate(172.900,0) scale(.73,1)">-5 582.06</text>
<circle cx="650" cy="458" r="5.500" fill="#eef2fa"/><path d="M646 458h8M650 454v8" stroke="#1b2fe0" stroke-width="1.500"/>
<text transform="translate(10,490) rotate(-90)" font-size="11.500" fill="#222" textLength="36" lengthAdjust="spacingAndGlyphs">工具箱</text>
<path d="M78 473v18M108.500 473v18M139 473v18M182.500 473v18M230 473v18M260.700 473v18M291.500 473v18M322.600 473v18M361 473v18M392 473v18" stroke="#888"/>
<g transform="scale(.73,1)" font-size="12.500" fill="#888"><text y="485"><tspan x="32" fill="#111">交易</tspan><tspan x="74">敞口</tspan><tspan x="115">历史</tspan><tspan x="157">新闻</tspan><tspan x="200">邮箱</tspan><tspan x="259">经济日历</tspan><tspan x="325">公司</tspan><tspan x="366">预警</tspan><tspan x="408">文章</tspan><tspan x="450">代码库</tspan><tspan x="504">专家</tspan><tspan x="546">日志</tspan><tspan x="725" fill="#222">市场</tspan><tspan x="779" fill="#222">信号</tspan><tspan x="833" fill="#222">VPS</tspan><tspan x="884" fill="#222">测试</tspan></text>
<text x="226" y="489" font-size="9" fill="#e02020">11</text>
<text y="510" fill="#222"><tspan x="3">查看帮助,请按 F1</tspan><tspan x="240">Default</tspan><tspan x="825">33.3 / 1.1 Mb</tspan></text></g>
</g>
<!-- TR -->
<g transform="translate(1250,0)">
<use href="#chrome"/>
<text x="20.500" y="50" font-size="13" fill="#333" textLength="407.500" lengthAdjust="spacingAndGlyphs">5958292 - GTCGlobalTrade-Server - Hedge - GTC Global Trade Capital Co. Limited - [XAUUSD.c,M5]</text>
<g transform="scale(.73,1)" font-size="12.500" fill="#111"><text y="73"><tspan x="30">文件(F)</tspan><tspan x="88">查看(V)</tspan><tspan x="148">插入(I)</tspan><tspan x="203">图表(C)</tspan><tspan x="262">工具(T)</tspan><tspan x="321">窗口(W)</tspan><tspan x="384">帮助(H)</tspan></text>
<text y="98"><tspan x="132" fill="#2a6fa8">IDE</tspan><tspan x="312">算法交易</tspan><tspan x="392">新订单</tspan><tspan x="101" fill="#b07a00">$</tspan><tspan x="813" fill="#fff" font-size="11">1</tspan></text></g>
<text x="614" y="107" font-size="7" fill="#1fae3a">LVL</text>
<rect y="108" width="670" height="80" fill="#000"/>
<use href="#mc" transform="translate(0,110)"/>
<rect x="3" y="111" width="180" height="57" fill="#000"/><rect x="9.400" y="130" width="173.600" height="21.700" fill="#222"/>
<path d="M3 152h3" stroke="#0f0"/><path d="M2 122h630" stroke="#667788"/>
<rect x="2.500" y="110" width="629" height="59" fill="none" stroke="#aaa"/>
<path d="M478.700 111h6l-3 3.500z" fill="#999"/>
<use href="#iH" x="6" y="116"/>
<text x="34" y="123" font-size="10" fill="#ddd" textLength="124" lengthAdjust="spacingAndGlyphs">XAUUSD.c, M5:  Gold vs US Dollar / Spot</text>
<text x="587.600" y="123" font-size="10" fill="#ddd" textLength="27" lengthAdjust="spacingAndGlyphs">MADING</text><use href="#iW" x="620" y="116"/>
<rect x="4.500" y="126.500" width="11" height="10" fill="#223" stroke="#889"/><path d="M7 131.500h6M10 128.500v6" stroke="#ccc"/>
<text x="12.800" y="146" font-size="13" fill="#dede00" textLength="90">=== 策略状态 ===</text>
<text x="20" y="136" font-size="11" fill="#ee0" textLength="65.500" lengthAdjust="spacingAndGlyphs">MTCommander资管</text>
<text x="13" y="163" font-size="11" fill="#00e000" textLength="107">当日已平仓金额: 306.16</text>
<rect x="633" y="117" width="27" height="10" fill="#7d8c9c"/><text transform="translate(635,125.500) scale(.62,1)" font-size="10.500" fill="#111">4735.51</text>
<path d="M632 139h4M47 169v4M91.500 169v4M136 169v4M180.500 169v4M225 169v4M270 169v4M314.500 169v4M359 169v4M403.500 169v4M448 169v4" stroke="#ccc"/>
<text transform="translate(636,143) scale(.62,1)" font-size="10.500" fill="#ddd">4723.20</text>
<g transform="translate(1,180.500) scale(.53,1)" font-size="11" fill="#ddd"><text><tspan x="0">20 Jan 2026</tspan><tspan x="84">20 Jan 08:25</tspan><tspan x="168">20 Jan 08:45</tspan><tspan x="253">20 Jan 09:05</tspan><tspan x="337">20 Jan 09:25</tspan><tspan x="421">20 Jan 09:45</tspan><tspan x="506">20 Jan 10:05</tspan><tspan x="590">20 Jan 10:25</tspan><tspan x="674">20 Jan 10:45</tspan><tspan x="759">20 Jan 11:05</tspan><tspan x="843">20 Jan 11:25</tspan></text></g>
<rect y="188" width="670" height="26" fill="#f0f0f0"/>
<rect x="3" y="188.500" width="71.500" height="19" fill="#fff" stroke="#333"/><path d="M76 190v19H5" stroke="#999" fill="none"/>
<text transform="translate(10,203) scale(.73,1)" font-size="12" fill="#111">XAUUSD.c,M5</text>
<use href="#iO" transform="translate(84,192) scale(.95)"/><text transform="translate(99,203) scale(.73,1)" font-size="12" fill="#888">VPS</text>
<path d="M643 196l-2 2 2 2zM656 196l2 2-2 2" fill="#aaa"/>
<rect y="214" width="12" height="256" fill="#a8bfd6"/><rect x="12" y="214" width="644.400" height="256" fill="#fff"/>
<text transform="translate(2,228) scale(.85,1)" font-size="12" font-weight="700">X</text>
<path d="M62 226.500h6l-3-3z"/>
<rect x="656.400" y="214" width="13.600" height="256" fill="#f0f0f0"/><rect x="656.400" y="316" width="13.600" height="136" fill="#cdcdcd"/>
<path d="M659 224l3-3 3 3M659 460l3 3 3-3" stroke="#555" fill="none"/>
<rect x="12" y="432" width="644.400" height="20" fill="#c3c3c3"/>
<circle cx="18.500" cy="442" r="3.300" fill="none" stroke="#222"/><path d="M16.500 442h4" stroke="#222"/>
<text x="27" y="446" font-size="11.500" font-weight="700" fill="#111" textLength="388" lengthAdjust="spacingAndGlyphs">结余: 13 370.37 USC  净值: 6 108.72  预付款: 974.31  可用预付款: 5 134.41  预付款维持率: 626.98 %</text>
<text x="640.600" y="446" font-size="11.500" font-weight="700" text-anchor="end" fill="#111" transform="translate(172.900,0) scale(.73,1)">-7 261.65</text>
<circle cx="650" cy="442" r="5.500" fill="#eef2fa"/><path d="M646 442h8M650 438v8" stroke="#1b2fe0" stroke-width="1.500"/>
<text transform="translate(10,490) rotate(-90)" font-size="11.500" fill="#222" textLength="36" lengthAdjust="spacingAndGlyphs">工具箱</text>
<path d="M77.500 473v18M108 473v18M138.500 473v18M187 473v18M234.500 473v18M265.500 473v18M296 473v18M327 473v18M365.500 473v18M396.500 473v18" stroke="#888"/>
<g transform="scale(.73,1)" font-size="12.500" fill="#888"><text y="485"><tspan x="31" fill="#111">交易</tspan><tspan x="73">敞口</tspan><tspan x="114">历史</tspan><tspan x="156">新闻</tspan><tspan x="199">邮箱</tspan><tspan x="265">经济日历</tspan><tspan x="330">公司</tspan><tspan x="372">预警</tspan><tspan x="414">文章</tspan><tspan x="456">代码库</tspan><tspan x="510">专家</tspan><tspan x="552">日志</tspan><tspan x="725" fill="#222">市场</tspan><tspan x="779" fill="#222">信号</tspan><tspan x="833" fill="#222">VPS</tspan><tspan x="884" fill="#222">测试</tspan></text>
<text x="224" y="489" font-size="9" fill="#e02020">107</text>
<text y="510" fill="#222"><tspan x="2">查看帮助,请按 F1</tspan><tspan x="239">Default</tspan><tspan x="824">34.3 / 1.1 Mb</tspan></text></g>
</g>
<!-- BL -->
<g transform="translate(580,485)">
<use href="#chrome"/>
<text x="20" y="50" font-size="13" fill="#8a8a8a" textLength="407.500" lengthAdjust="spacingAndGlyphs">5986564 - GTCGlobalTrade-Server - Hedge - GTC Global Trade Capital Co. Limited - [XAUUSD.c,M5]</text>
<g transform="scale(.73,1)" font-size="12.500" fill="#111"><text y="73"><tspan x="30">文件(F)</tspan><tspan x="88">查看(V)</tspan><tspan x="148">插入(I)</tspan><tspan x="203">图表(C)</tspan><tspan x="262">工具(T)</tspan><tspan x="321">窗口(W)</tspan><tspan x="384">帮助(H)</tspan></text>
<text y="98"><tspan x="132" fill="#2a6fa8">IDE</tspan><tspan x="312">算法交易</tspan><tspan x="392">新订单</tspan><tspan x="101" fill="#b07a00">$</tspan><tspan x="813" fill="#fff" font-size="11">1</tspan></text></g>
<text x="614" y="107" font-size="7" fill="#1fae3a">LVL</text>
<rect y="108" width="670" height="80" fill="#000"/>
<use href="#mc" transform="translate(0,110)"/>
<rect x="3" y="111" width="180" height="57" fill="#000"/><rect x="9.400" y="130" width="173.600" height="21.700" fill="#222"/>
<path d="M3 152h3" stroke="#0f0"/><path d="M2 122h630" stroke="#667788"/>
<rect x="2.500" y="110" width="629" height="59" fill="none" stroke="#aaa"/>
<path d="M478.700 111h6l-3 3.500z" fill="#999"/>
<use href="#iH" x="6" y="116"/>
<text x="34" y="123" font-size="10" fill="#ddd" textLength="124" lengthAdjust="spacingAndGlyphs">XAUUSD.c, M5:  Gold vs US Dollar / Spot</text>
<text x="587.600" y="123" font-size="10" fill="#ddd" textLength="27" lengthAdjust="spacingAndGlyphs">MADING</text><use href="#iW" x="620" y="116"/>
<rect x="4.500" y="126.500" width="11" height="10" fill="#223" stroke="#889"/><path d="M7 131.500h6M10 128.500v6" stroke="#ccc"/>
<text x="12.800" y="146" font-size="13" fill="#dede00" textLength="90">=== 策略状态 ===</text>
<text x="20" y="136" font-size="11" fill="#ee0" textLength="65.500" lengthAdjust="spacingAndGlyphs">MTCommander资管</text>
<text x="13" y="163" font-size="11" fill="#00e000" textLength="107">当日已平仓金额: 307.77</text>
<rect x="633" y="117" width="27" height="10" fill="#7d8c9c"/><text transform="translate(635,125.500) scale(.62,1)" font-size="10.500" fill="#111">4735.52</text>
<path d="M632 139h4M47 169v4M91.500 169v4M136 169v4M180.500 169v4M225 169v4M270 169v4M314.500 169v4M359 169v4M403.500 169v4M448 169v4" stroke="#ccc"/>
<text transform="translate(636,143) scale(.62,1)" font-size="10.500" fill="#ddd">4723.20</text>
<g transform="translate(1,180.500) scale(.53,1)" font-size="11" fill="#ddd"><text><tspan x="0">20 Jan 2026</tspan><tspan x="84">20 Jan 08:25</tspan><tspan x="168">20 Jan 08:45</tspan><tspan x="253">20 Jan 09:05</tspan><tspan x="337">20 Jan 09:25</tspan><tspan x="421">20 Jan 09:45</tspan><tspan x="506">20 Jan 10:05</tspan><tspan x="590">20 Jan 10:25</tspan><tspan x="674">20 Jan 10:45</tspan><tspan x="759">20 Jan 11:05</tspan><tspan x="843">20 Jan 11:25</tspan></text></g>
<rect y="188" width="670" height="26" fill="#f0f0f0"/>
<rect x="3" y="188.500" width="71.500" height="19" fill="#fff" stroke="#333"/><path d="M76 190v19H5" stroke="#999" fill="none"/>
<text transform="translate(10,203) scale(.73,1)" font-size="12" fill="#111">XAUUSD.c,M5</text>
<use href="#iO" transform="translate(84,192) scale(.95)"/><text transform="translate(99,203) scale(.73,1)" font-size="12" fill="#888">VPS</text>
<path d="M643 196l-2 2 2 2zM656 196l2 2-2 2" fill="#aaa"/>
<rect y="214" width="12" height="256" fill="#c5d3e0"/><rect x="12" y="214" width="644.400" height="256" fill="#fff"/>
<text transform="translate(2,228) scale(.85,1)" font-size="12" font-weight="700">X</text>
<path d="M62 226.500h6l-3-3z"/>
<rect x="656.400" y="214" width="13.600" height="256" fill="#f0f0f0"/><rect x="656.400" y="318" width="13.600" height="134" fill="#cdcdcd"/>
<path d="M659 224l3-3 3 3M659 460l3 3 3-3" stroke="#555" fill="none"/>
<rect x="12" y="432" width="644.400" height="20" fill="#c3c3c3"/>
<circle cx="18.500" cy="442" r="3.300" fill="none" stroke="#222"/><path d="M16.500 442h4" stroke="#222"/>
<text x="27" y="446" font-size="11.500" font-weight="700" fill="#111" textLength="388" lengthAdjust="spacingAndGlyphs">结余: 16 260.53 USC  净值: 9 010.61  预付款: 974.32  可用预付款: 8 036.29  预付款维持率: 924.81 %</text>
<text x="640.600" y="446" font-size="11.500" font-weight="700" text-anchor="end" fill="#111" transform="translate(172.900,0) scale(.73,1)">-7 249.92</text>
<circle cx="650" cy="442" r="5.500" fill="#eef2fa"/><path d="M646 442h8M650 438v8" stroke="#1b2fe0" stroke-width="1.500"/>
<text transform="translate(10,490) rotate(-90)" font-size="11.500" fill="#222" textLength="36" lengthAdjust="spacingAndGlyphs">工具箱</text>
<path d="M77.500 473v18M108 473v18M138.500 473v18M182 473v18M229.500 473v18M260.500 473v18M291 473v18M322 473v18M361 473v18M391.500 473v18" stroke="#888"/>
<g transform="scale(.73,1)" font-size="12.500" fill="#888"><text y="485"><tspan x="31" fill="#111">交易</tspan><tspan x="73">敞口</tspan><tspan x="114">历史</tspan><tspan x="156">新闻</tspan><tspan x="199">邮箱</tspan><tspan x="258">经济日历</tspan><tspan x="323">公司</tspan><tspan x="365">预警</tspan><tspan x="407">文章</tspan><tspan x="449">代码库</tspan><tspan x="503">专家</tspan><tspan x="545">日志</tspan><tspan x="725" fill="#222">市场</tspan><tspan x="779" fill="#222">信号</tspan><tspan x="833" fill="#222">VPS</tspan><tspan x="884" fill="#222">测试</tspan></text>
<text x="224" y="489" font-size="9" fill="#e02020">11</text>
<text y="510" fill="#222"><tspan x="2">查看帮助,请按 F1</tspan><tspan x="239">Default</tspan><tspan x="824">104 / 5 Mb</tspan></text></g>
</g>
<!-- BR -->
<g transform="translate(1250,485)">
<use href="#chrome"/>
<text x="20" y="50" font-size="13" fill="#8a8a8a" textLength="407.500" lengthAdjust="spacingAndGlyphs">5986562 - GTCGlobalTrade-Server - Hedge - GTC Global Trade Capital Co. Limited - [XAUUSD.c,M5]</text>
<g transform="scale(.73,1)" font-size="12.500" fill="#111"><text y="73"><tspan x="30">文件(F)</tspan><tspan x="88">查看(V)</tspan><tspan x="148">插入(I)</tspan><tspan x="203">图表(C)</tspan><tspan x="262">工具(T)</tspan><tspan x="321">窗口(W)</tspan><tspan x="384">帮助(H)</tspan></text>
<text y="98"><tspan x="132" fill="#2a6fa8">IDE</tspan><tspan x="312">算法交易</tspan><tspan x="392">新订单</tspan><tspan x="101" fill="#b07a00">$</tspan><tspan x="813" fill="#fff" font-size="11">1</tspan></text></g>
<text x="614" y="107" font-size="7" fill="#1fae3a">LVL</text>
<rect y="108" width="670" height="80" fill="#000"/>
<use href="#mc" transform="translate(-11,110)"/>
<rect x="3" y="111" width="180" height="57" fill="#000"/><rect x="9.400" y="130" width="173.600" height="21.700" fill="#222"/>
<path d="M3 152h3" stroke="#0f0"/><path d="M2 122h630" stroke="#667788"/>
<rect x="2.500" y="110" width="629" height="59" fill="none" stroke="#aaa"/>
<path d="M467.700 111h6l-3 3.500z" fill="#999"/>
<use href="#iH" x="6" y="116"/>
<text x="34" y="123" font-size="10" fill="#ddd" textLength="124" lengthAdjust="spacingAndGlyphs">XAUUSD.c, M5:  Gold vs US Dollar / Spot</text>
<text x="587.600" y="123" font-size="10" fill="#ddd" textLength="27" lengthAdjust="spacingAndGlyphs">MADING</text><use href="#iW" x="620" y="116"/>
<rect x="4.500" y="126.500" width="11" height="10" fill="#223" stroke="#889"/><path d="M7 131.500h6M10 128.500v6" stroke="#ccc"/>
<text x="12.800" y="146" font-size="13" fill="#dede00" textLength="90">=== 策略状态 ===</text>
<text x="20" y="136" font-size="11" fill="#ee0" textLength="65.500" lengthAdjust="spacingAndGlyphs">MTCommander资管</text>
<text x="13" y="163" font-size="11" fill="#e00000" textLength="112">当日已平仓金额: -297.83</text>
<rect x="633" y="117" width="27" height="10" fill="#7d8c9c"/><text transform="translate(635,125.500) scale(.62,1)" font-size="10.500" fill="#111">4735.52</text>
<path d="M632 139h4M47 169v4M91.500 169v4M136 169v4M180.500 169v4M225 169v4M270 169v4M314.500 169v4M359 169v4M403.500 169v4M448 169v4" stroke="#ccc"/>
<text transform="translate(636,143) scale(.62,1)" font-size="10.500" fill="#ddd">4723.20</text>
<g transform="translate(1,180.500) scale(.53,1)" font-size="11" fill="#ddd"><text><tspan x="0">20 Jan 2026</tspan><tspan x="84">20 Jan 08:30</tspan><tspan x="168">20 Jan 08:50</tspan><tspan x="253">20 Jan 09:10</tspan><tspan x="337">20 Jan 09:30</tspan><tspan x="421">20 Jan 09:50</tspan><tspan x="506">20 Jan 10:10</tspan><tspan x="590">20 Jan 10:30</tspan><tspan x="674">20 Jan 10:50</tspan><tspan x="759">20 Jan 11:10</tspan><tspan x="843">20 Jan 11:30</tspan></text></g>
<rect y="188" width="670" height="26" fill="#f0f0f0"/>
<rect x="3" y="188.500" width="71.500" height="19" fill="#fff" stroke="#333"/><path d="M76 190v19H5" stroke="#999" fill="none"/>
<text transform="translate(10,203) scale(.73,1)" font-size="12" fill="#111">XAUUSD.c,M5</text>
<use href="#iO" transform="translate(84,192) scale(.95)"/><text transform="translate(99,203) scale(.73,1)" font-size="12" fill="#888">VPS</text>
<path d="M643 196l-2 2 2 2zM656 196l2 2-2 2" fill="#aaa"/>
<rect y="214" width="12" height="256" fill="#c5d3e0"/><rect x="12" y="214" width="644.400" height="256" fill="#fff"/>
<text transform="translate(2,228) scale(.85,1)" font-size="12" font-weight="700">X</text>
<path d="M219 226.500h6l-3-3z"/>
<rect x="656.400" y="214" width="13.600" height="256" fill="#f0f0f0"/><rect x="656.400" y="318" width="13.600" height="134" fill="#cdcdcd"/>
<path d="M659 224l3-3 3 3M659 460l3 3 3-3" stroke="#555" fill="none"/>
<rect x="12" y="432" width="644.400" height="20" fill="#c3c3c3"/>
<circle cx="18.500" cy="442" r="3.300" fill="none" stroke="#222"/><path d="M16.500 442h4" stroke="#222"/>
<text x="27" y="446" font-size="11.500" font-weight="700" fill="#111" textLength="400.500" lengthAdjust="spacingAndGlyphs">结余: 15 930.15 USC  净值: 10 346.59  预付款: 714.68  可用预付款: 9 631.91  预付款维持率: 1 447.72 %</text>
<text x="640.600" y="446" font-size="11.500" font-weight="700" text-anchor="end" fill="#111" transform="translate(172.900,0) scale(.73,1)">-5 583.56</text>
<circle cx="650" cy="442" r="5.500" fill="#eef2fa"/><path d="M646 442h8M650 438v8" stroke="#1b2fe0" stroke-width="1.500"/>
<text transform="translate(10,490) rotate(-90)" font-size="11.500" fill="#222" textLength="36" lengthAdjust="spacingAndGlyphs">工具箱</text>
<path d="M77.500 473v18M108 473v18M138.500 473v18M182 473v18M229.500 473v18M260.500 473v18M291 473v18M321 473v18M383.500 473v18M414 473v18" stroke="#888"/>
<g transform="scale(.73,1)" font-size="12.500" fill="#888"><text y="485"><tspan x="31" fill="#111">交易</tspan><tspan x="73">敞口</tspan><tspan x="114">历史</tspan><tspan x="156">新闻</tspan><tspan x="199">邮箱</tspan><tspan x="258">经济日历</tspan><tspan x="323">公司</tspan><tspan x="365">预警</tspan><tspan x="407">文章</tspan><tspan x="449">代码库</tspan><tspan x="534">专家</tspan><tspan x="576">日志</tspan><tspan x="725" fill="#222">市场</tspan><tspan x="779" fill="#222">信号</tspan><tspan x="833" fill="#222">VPS</tspan><tspan x="884" fill="#222">测试</tspan></text>
<text x="224" y="489" font-size="9" fill="#e02020">11</text><text x="486" y="489" font-size="9" fill="#e02020">6831</text>
<text y="510" fill="#222"><tspan x="2">查看帮助,请按 F1</tspan><tspan x="239">Default</tspan><tspan x="824">174.39 ms</tspan></text></g>
</g>
</g>
<path d="M1249.500 32v974" stroke="#2f5f80"/>
<rect x="580" y="1001" width="1340" height="6" fill="#0c2a3c"/><rect x="717" y="1001" width="34" height="6" fill="#2f4a5a"/><rect x="785" y="1001" width="34" height="6" fill="#2f4a5a"/>
</svg>

<div class="t lt" style="left:0;top:686px">
<div class="r h"><b>交易品种</b><b>订单...</b><b>时间</b><b>类型</b><b>交易量</b><b>价位</b><b>止损</b><b>止盈</b><b>价位</b><b>盈利</b></div>
<div class="r"><b>xauu...</b><b>3222...</b><b>2026.01.2...</b><b>sell</b><b>0.08</b><b>4673....</b><b></b><b>47...</b><b>4735....</b><b>-494....</b></div>
<div class="r g"><b>xauu...</b><b>3222...</b><b>2026.01.2...</b><b>sell</b><b>0.09</b><b>4675....</b><b></b><b>47...</b><b>4735....</b><b>-541....</b></div>
<div class="r"><b>xauu...</b><b>3227...</b><b>2026.01.2...</b><b>sell</b><b>0.11</b><b>4707....</b><b></b><b>47...</b><b>4735....</b><b>-307....</b></div>
<div class="r g"><b>xauu...</b><b>3228...</b><b>2026.01.2...</b><b>sell</b><b>0.14</b><b>4709....</b><b></b><b>47...</b><b>4735....</b><b>-366....</b></div>
<div class="r"><b>xauu...</b><b>3229...</b><b>2026.01.2...</b><b>sell</b><b>0.17</b><b>4717....</b><b></b><b>47...</b><b>4735....</b><b>-315....</b></div>
<div class="r g"><b>xauu...</b><b>3229...</b><b>2026.01.2...</b><b>sell</b><b>0.2</b><b>4718....</b><b></b><b>47...</b><b>4735....</b><b>-338....</b></div>
<div class="r"><b>xauu...</b><b>3230...</b><b>2026.01.2...</b><b>sell</b><b>0.24</b><b>4721....</b><b></b><b>47...</b><b>4735....</b><b>-338....</b></div>
<div class="r g"><b>xauu...</b><b>3230...</b><b>2026.01.2...</b><b>sell</b><b>0.29</b><b>4722....</b><b></b><b>47...</b><b>4735....</b><b>-398....</b></div>
<div class="r"><b>xauu...</b><b>3231...</b><b>2026.01.2...</b><b>sell</b><b>0.35</b><b>4723....</b><b></b><b>47...</b><b>4735....</b><b>-425....</b></div>
<div class="r g"><b>xauu...</b><b>3232...</b><b>2026.01.2...</b><b>sell</b><b>0.42</b><b>4726....</b><b></b><b>47...</b><b>4735....</b><b>-372....</b></div>
<div class="r"><b>xauu...</b><b>3232...</b><b>2026.01.2...</b><b>sell</b><b>0.51</b><b>4728....</b><b></b><b>47...</b><b>4735....</b><b>-366....</b></div>
<div class="r g"><b>xauu...</b><b>3232...</b><b>2026.01.2...</b><b>sell</b><b>0.61</b><b>4730....</b><b></b><b>47...</b><b>4735....</b><b>-336....</b></div>
</div>

<div class="t" style="left:580px;top:210px">
<div class="r h"><b>交易品种</b><b>订单号</b><b>时间</b><b>类型</b><b>交易量</b><b>价位</b><b>止损</b><b>止盈</b><b>价位</b><b>盈利</b></div>
<div class="r g"><b>xauusd.c</b><b>322250640</b><b>2026.01.20 05:40:10</b><b>sell</b><b>0.11</b><b>4677.36</b><b></b><b>4716.83</b><b>4735.79</b><b>-642.73</b></div>
<div class="r"><b>xauusd.c</b><b>322787159</b><b>2026.01.20 08:39:00</b><b>sell</b><b>0.14</b><b>4707.03</b><b></b><b>4716.83</b><b>4735.79</b><b>-402.64</b></div>
<div class="r g"><b>xauusd.c</b><b>322805286</b><b>2026.01.20 08:43:47</b><b>sell</b><b>0.17</b><b>4709.62</b><b></b><b>4716.83</b><b>4735.79</b><b>-444.89</b></div>
<div class="r"><b>xauusd.c</b><b>322968720</b><b>2026.01.20 09:55:10</b><b>sell</b><b>0.2</b><b>4717.29</b><b></b><b>4716.83</b><b>4735.79</b><b>-370.00</b></div>
<div class="r g"><b>xauusd.c</b><b>322988505</b><b>2026.01.20 10:03:44</b><b>sell</b><b>0.24</b><b>4718.83</b><b></b><b>4716.83</b><b>4735.79</b><b>-407.04</b></div>
<div class="r"><b>xauusd.c</b><b>323038069</b><b>2026.01.20 10:20:10</b><b>sell</b><b>0.29</b><b>4721.26</b><b></b><b>4716.83</b><b>4735.80</b><b>-421.66</b></div>
<div class="r g"><b>xauusd.c</b><b>323095283</b><b>2026.01.20 10:32:51</b><b>sell</b><b>0.35</b><b>4723.00</b><b></b><b>4716.83</b><b>4735.79</b><b>-447.65</b></div>
<div class="r"><b>xauusd.c</b><b>323143497</b><b>2026.01.20 10:47:28</b><b>sell</b><b>0.24</b><b>4724.82</b><b></b><b>4716.83</b><b>4735.80</b><b>-263.52</b></div>
<div class="r g"><b>xauusd.c</b><b>323211857</b><b>2026.01.20 11:10:47</b><b>sell</b><b>0.29</b><b>4726.94</b><b></b><b>4716.83</b><b>4735.80</b><b>-256.94</b></div>
<div class="r"><b>xauusd.c</b><b>323261193</b><b>2026.01.20 11:24:28</b><b>sell</b><b>0.35</b><b>4728.54</b><b></b><b>4716.83</b><b>4735.80</b><b>-254.10</b></div>
<div class="r g"><b>xauusd.c</b><b>323269942</b><b>2026.01.20 11:27:54</b><b>sell</b><b>0.42</b><b>4730.15</b><b></b><b>4716.83</b><b>4735.80</b><b>-237.30</b></div>
</div>

<div class="t" style="left:1250px;top:214px">
<div class="r h"><b>交易品种</b><b>订单号</b><b>时间</b><b>类型</b><b>交易量</b><b>价位</b><b>止损</b><b>止盈</b><b>价位</b><b>盈利</b></div>
<div class="r g"><b>xauusd.c</b><b>322787155</b><b>2026.01.20 08:39:00</b><b>sell</b><b>0.14</b><b>4707.03</b><b></b><b>4717.68</b><b>4735.81</b><b>-402.92</b></div>
<div class="r"><b>xauusd.c</b><b>322803727</b><b>2026.01.20 08:43:33</b><b>sell</b><b>0.17</b><b>4709.63</b><b></b><b>4717.68</b><b>4735.81</b><b>-445.06</b></div>
<div class="r g"><b>xauusd.c</b><b>322968697</b><b>2026.01.20 09:55:08</b><b>sell</b><b>0.2</b><b>4717.47</b><b></b><b>4717.68</b><b>4735.81</b><b>-366.80</b></div>
<div class="r s"><b>xauusd.c</b><b>322989833</b><b>2026.01.20 10:04:08</b><b>sell</b><b>0.24</b><b>4719.34</b><b></b><b>4717.68</b><b>4735.79</b><b>-394.80</b></div>
<div class="r g"><b>xauusd.c</b><b>323038030</b><b>2026.01.20 10:20:08</b><b>sell</b><b>0.29</b><b>4721.24</b><b></b><b>4717.68</b><b>4735.81</b><b>-422.53</b></div>
<div class="r"><b>xauusd.c</b><b>323090587</b><b>2026.01.20 10:30:46</b><b>sell</b><b>0.35</b><b>4722.17</b><b></b><b>4717.68</b><b>4735.81</b><b>-477.40</b></div>
<div class="r g"><b>xauusd.c</b><b>323138913</b><b>2026.01.20 10:45:28</b><b>sell</b><b>0.42</b><b>4723.79</b><b></b><b>4717.68</b><b>4735.81</b><b>-504.84</b></div>
<div class="r"><b>xauusd.c</b><b>323211818</b><b>2026.01.20 11:10:47</b><b>sell</b><b>0.51</b><b>4726.94</b><b></b><b>4717.68</b><b>4735.81</b><b>-452.37</b></div>
<div class="r g"><b>xauusd.c</b><b>323259622</b><b>2026.01.20 11:23:25</b><b>sell</b><b>0.61</b><b>4728.62</b><b></b><b>4717.68</b><b>4735.81</b><b>-438.59</b></div>
<div class="r"><b>xauusd.c</b><b>323271302</b><b>2026.01.20 11:28:37</b><b>sell</b><b>0.73</b><b>4730.30</b><b></b><b>4717.68</b><b>4735.81</b><b>-402.23</b></div>
</div>

<div class="t" style="left:580px;top:699px">
<div class="r h"><b>交易品种</b><b>订单号</b><b>时间</b><b>类型</b><b>交易量</b><b>价位</b><b>止损</b><b>止盈</b><b>价位</b><b>盈利</b></div>
<div class="r g"><b>xauusd.c</b><b>322787123</b><b>2026.01.20 08:39:00</b><b>sell</b><b>0.14</b><b>4706.96</b><b></b><b>4717.69</b><b>4735.79</b><b>-403.62</b></div>
<div class="r"><b>xauusd.c</b><b>322805861</b><b>2026.01.20 08:43:57</b><b>sell</b><b>0.17</b><b>4708.64</b><b></b><b>4717.69</b><b>4735.79</b><b>-461.55</b></div>
<div class="r g"><b>xauusd.c</b><b>322968712</b><b>2026.01.20 09:55:09</b><b>sell</b><b>0.2</b><b>4717.30</b><b></b><b>4717.69</b><b>4735.79</b><b>-369.80</b></div>
<div class="r"><b>xauusd.c</b><b>322988510</b><b>2026.01.20 10:03:44</b><b>sell</b><b>0.24</b><b>4718.95</b><b></b><b>4717.69</b><b>4735.79</b><b>-404.16</b></div>
<div class="r g"><b>xauusd.c</b><b>323038063</b><b>2026.01.20 10:20:09</b><b>sell</b><b>0.29</b><b>4721.26</b><b></b><b>4717.69</b><b>4735.79</b><b>-421.37</b></div>
<div class="r"><b>xauusd.c</b><b>323131991</b><b>2026.01.20 10:42:46</b><b>sell</b><b>0.35</b><b>4722.96</b><b></b><b>4717.69</b><b>4735.79</b><b>-449.05</b></div>
<div class="r g"><b>xauusd.c</b><b>323143496</b><b>2026.01.20 10:47:29</b><b>sell</b><b>0.42</b><b>4724.77</b><b></b><b>4717.69</b><b>4735.79</b><b>-462.84</b></div>
<div class="r"><b>xauusd.c</b><b>323211822</b><b>2026.01.20 11:10:47</b><b>sell</b><b>0.51</b><b>4726.94</b><b></b><b>4717.69</b><b>4735.79</b><b>-451.35</b></div>
<div class="r g"><b>xauusd.c</b><b>323258267</b><b>2026.01.20 11:23:16</b><b>sell</b><b>0.61</b><b>4728.58</b><b></b><b>4717.69</b><b>4735.79</b><b>-439.81</b></div>
<div class="r"><b>xauusd.c</b><b>323271394</b><b>2026.01.20 11:28:38</b><b>sell</b><b>0.73</b><b>4730.29</b><b></b><b>4717.69</b><b>4735.79</b><b>-401.50</b></div>
</div>

<div class="t" style="left:1250px;top:699px">
<div class="r h"><b>交易品种</b><b>订单号</b><b style="padding-right:51px">时间</b><b>类型</b><b>交易量</b><b>价位</b><b>止损</b><b>止盈</b><b>价位</b><b>盈利</b></div>
<div class="r"><b>xauusd.c</b><b>322787152</b><b>2026.01.20 08:39:00</b><b>sell</b><b>0.14</b><b>4707.03</b><b></b><b>4716.82</b><b>4735.79</b><b>-402.64</b></div>
<div class="r g"><b>xauusd.c</b><b>322805824</b><b>2026.01.20 08:43:56</b><b>sell</b><b>0.17</b><b>4708.89</b><b></b><b>4716.82</b><b>4735.79</b><b>-457.30</b></div>
<div class="r"><b>xauusd.c</b><b>322968732</b><b>2026.01.20 09:55:11</b><b>sell</b><b>0.2</b><b>4717.32</b><b></b><b>4716.82</b><b>4735.79</b><b>-369.40</b></div>
<div class="r g"><b>xauusd.c</b><b>322988498</b><b>2026.01.20 10:03:44</b><b>sell</b><b>0.24</b><b>4718.83</b><b></b><b>4716.82</b><b>4735.80</b><b>-407.28</b></div>
<div class="r"><b>xauusd.c</b><b>323038067</b><b>2026.01.20 10:20:09</b><b>sell</b><b>0.29</b><b>4721.26</b><b></b><b>4716.82</b><b>4735.80</b><b>-421.66</b></div>
<div class="r g"><b>xauusd.c</b><b>323054430</b><b>2026.01.20 10:22:20</b><b>sell</b><b>0.35</b><b>4723.19</b><b></b><b>4716.82</b><b>4735.80</b><b>-441.35</b></div>
<div class="r"><b>xauusd.c</b><b>323146334</b><b>2026.01.20 10:48:28</b><b>sell</b><b>0.24</b><b>4724.81</b><b></b><b>4716.82</b><b>4735.80</b><b>-263.76</b></div>
<div class="r g"><b>xauusd.c</b><b>323211847</b><b>2026.01.20 11:10:47</b><b>sell</b><b>0.29</b><b>4726.94</b><b></b><b>4716.82</b><b>4735.80</b><b>-256.94</b></div>
<div class="r"><b>xauusd.c</b><b>323258272</b><b>2026.01.20 11:23:16</b><b>sell</b><b>0.35</b><b>4728.58</b><b></b><b>4716.82</b><b>4735.80</b><b>-252.70</b></div>
<div class="r g"><b>xauusd.c</b><b>323271289</b><b>2026.01.20 11:28:37</b><b>sell</b><b>0.42</b><b>4730.30</b><b></b><b>4716.82</b><b>4735.80</b><b>-231.00</b></div>
</div>
</body></html>
